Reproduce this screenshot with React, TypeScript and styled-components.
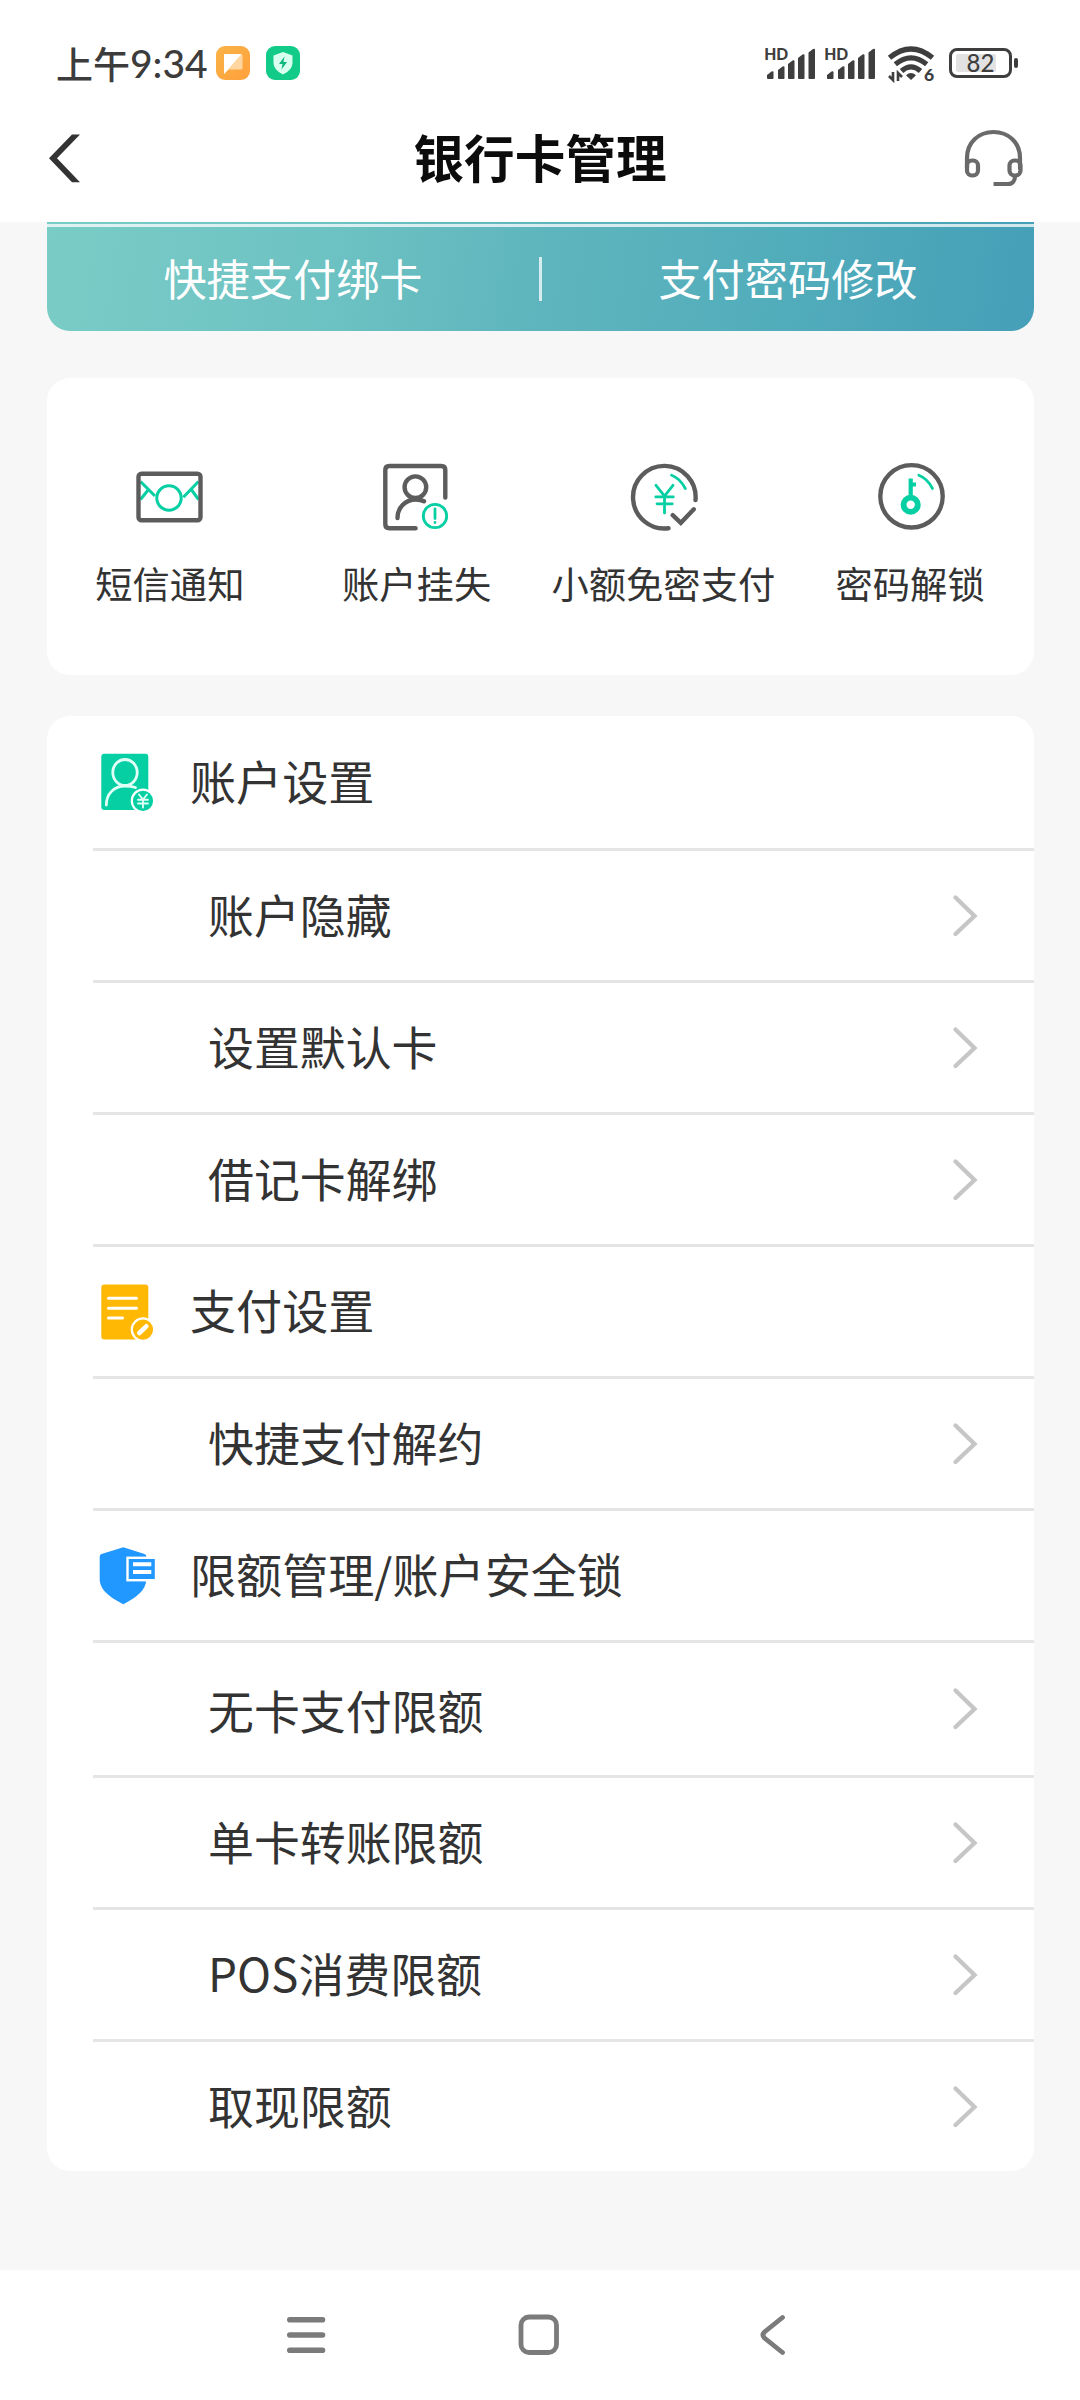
import React from 'react';
import styled, { createGlobalStyle } from 'styled-components';

const GlobalStyle = createGlobalStyle`
  * { box-sizing: border-box; }
  body { margin: 0; background: #f7f7f7; }
  svg { display: block; flex: none; overflow: visible; }
`;

const INK = '#333333';
const GREY = '#5c5c5c';
const MINT = '#06cfa4';

const Screen = styled.div`
  width: 1080px;
  height: 2400px;
  display: flex;
  flex-direction: column;
  overflow: hidden;
  background: #f7f7f7;
  color: ${INK};
  font-family: 'Noto Sans CJK SC', 'Noto Sans', sans-serif;
`;

const StatusBar = styled.header`
  height: 126px;
  flex: none;
  display: flex;
  align-items: center;
  justify-content: space-between;
  padding: 0 61px 0 56px;
  background: #fff;
`;

const StatusSide = styled.div`
  display: flex;
  align-items: center;
`;

const Clock = styled.div`
  display: flex;
  align-items: center;
  width: 160px;
  height: 40px;
  color: #3c3c3c;
  white-space: nowrap;
`;

const DayPart = styled.span`
  font-size: 37px;
  font-weight: 500;
  line-height: 40px;
`;

const Time = styled.span`
  font-family: Lato, sans-serif;
  font-size: 39px;
  font-weight: 500;
  line-height: 40px;
`;

const NotificationIcons = styled.div`
  display: flex;
  gap: 16px;
`;

const TitleBar = styled.div`
  height: 96px;
  flex: none;
  display: grid;
  grid-template-columns: 80px 1fr 80px;
  align-items: center;
  padding: 0 48px;
  background: #fff;
`;

const Title = styled.h1`
  margin: 0;
  padding-bottom: 36px;
  text-align: center;
  font-size: 50.6px;
  line-height: 60px;
  font-weight: 700;
  color: #0c0c0c;
`;

const BarIcon = styled.div<{ $end?: boolean }>`
  display: flex;
  justify-content: ${(p) => (p.$end ? 'flex-end' : 'flex-start')};
  padding: 0 ${(p) => (p.$end ? 8 : 0)}px ${(p) => (p.$end ? 30 : 32)}px 0;
`;

const Content = styled.main`
  flex: 1;
  display: flex;
  flex-direction: column;
  padding: 0 46px 0 47px;
`;

const Banner = styled.section`
  height: 109px;
  display: flex;
  flex-direction: column;
  border-radius: 0 0 23px 23px;
  background: linear-gradient(98deg, #7accc6 0%, #6cc1c2 30%, #5fb5bd 50%, #52adbb 73%, #459fb8 100%);
`;

const BannerSeam = styled.div`
  height: 3px;
  margin-top: 2px;
  background: rgba(255, 255, 255, 0.75);
`;

const BannerActions = styled.div`
  flex: 1;
  display: flex;
  align-items: center;
`;

const BannerAction = styled.button`
  flex: 1;
  border: 0;
  padding: 0 0 5px;
  background: none;
  color: #fff;
  font: 400 43.2px/60px 'Noto Sans CJK SC', sans-serif;
`;

const BannerDivider = styled.span`
  width: 3px;
  height: 44px;
  background: rgba(255, 255, 255, 0.75);
`;

const Card = styled.section`
  background: #fff;
  border-radius: 23px;
`;

const QuickCard = styled(Card)`
  height: 297px;
  margin: 47px 0 41px;
  display: grid;
  grid-template-columns: repeat(4, 1fr);
  padding-top: 82px;
`;

const QuickItem = styled.div`
  display: flex;
  flex-direction: column;
  align-items: center;
  gap: 22px;
`;

const QuickLabel = styled.span`
  padding-right: 1px;
  font-size: 37.3px;
  line-height: 54px;
  white-space: nowrap;
`;

const ListCard = styled(Card)`
  height: 1455px;
  padding-left: 46px;
`;

const Row = styled.div<{ $height: number; $section?: boolean }>`
  height: ${(p) => p.$height}px;
  display: flex;
  align-items: center;
  padding: 0 56px 0 ${(p) => (p.$section ? 4 : 115)}px;
  border-bottom: 3px solid #e5e5e5;
  &:last-child { border-bottom: 0; }
`;

const RowText = styled.span<{ $section?: boolean; $lift: number }>`
  flex: 1;
  padding-left: ${(p) => (p.$section ? 33 : 0)}px;
  padding-bottom: ${(p) => p.$lift}px;
  font-size: ${(p) => (p.$section ? 46.1 : 45.9)}px;
  line-height: 66px;
`;

const NavBar = styled.nav`
  height: 130px;
  flex: none;
  display: grid;
  grid-template-columns: 232px 241px 27px;
  align-items: center;
  padding-left: 286px;
  background: #fff;
`;

const signalBars = [
  [2, 71, 79], [13, 66, 79], [23, 60, 79], [33, 54, 79], [43.5, 48.5, 79],
];

const Signal = () => (
  <svg width="60" height="40" viewBox="0 43 60 40" fill="#3e3e3e">
    <text x="-0.8" y="59.6" fontFamily="Lato, sans-serif" fontSize="16.5" fontWeight="900" textLength="24" lengthAdjust="spacingAndGlyphs">HD</text>
    {signalBars.map(([x, top, bottom]) => (
      <path key={x} d={`M${x} ${top + 4}L${x + 4.5} ${top + 0.6}Q${x + 6.5} ${top - 0.6} ${x + 6.5} ${top + 1.6}V${bottom - 1}Q${x + 6.5} ${bottom} ${x + 5.5} ${bottom}H${x + 1}Q${x} ${bottom} ${x} ${bottom - 1}Z`} />
    ))}
  </svg>
);

const Wifi = () => (
  <svg width="64" height="40" viewBox="885 43 64 40" fill="none" stroke="#3e3e3e" strokeWidth="5.2">
    <path d="M889.5 57.8Q911 40.2 932.5 57.8" />
    <path d="M895.3 64.3Q911 51.4 926.7 64.3" />
    <path d="M901.5 71Q911 62.8 920.5 71" />
    <path d="M906 75.2Q911 71 916 75.2L911 80Z" fill="#3e3e3e" stroke="none" />
    <path d="M893 72V80L889 76M898 81V73L902 77" strokeWidth="2.6" />
    <text x="924" y="81" fill="#3e3e3e" stroke="none" fontFamily="Lato, sans-serif" fontSize="17.5" fontWeight="900">6</text>
  </svg>
);

const Battery = () => (
  <svg width="70" height="40" viewBox="949 43 70 40">
    <rect x="950.5" y="49.5" width="60" height="27" rx="6.5" fill="none" stroke="#3e3e3e" strokeWidth="3" />
    <rect x="956" y="54" width="40" height="18" rx="2" fill="#e2e2e2" />
    <rect x="1014" y="58" width="4" height="10" rx="2" fill="#3e3e3e" />
    <text x="980.5" y="71.5" textAnchor="middle" fill="#3e3e3e" fontFamily="Lato, sans-serif" fontSize="24" fontWeight="500">82</text>
  </svg>
);

const NoteApp = () => (
  <svg width="34" height="34" viewBox="0 0 34 34">
    <defs>
      <linearGradient id="note" x1="0" y1="0" x2="1" y2="1">
        <stop offset="0" stopColor="#f9b347" />
        <stop offset="1" stopColor="#ffa03c" />
      </linearGradient>
    </defs>
    <rect width="34" height="34" rx="9" fill="url(#note)" />
    <path d="M9 8H25Q26.5 8 26.5 9.5V22Q26.5 23.5 25 23.5H13L8 28V9Q8 8 9 8Z" fill="#ffd6a0" />
    <path d="M9 8H25.5L8 28V9Q8 8 9 8Z" fill="#fff" />
  </svg>
);

const ShieldApp = () => (
  <svg width="34" height="34" viewBox="0 0 34 34">
    <rect width="34" height="34" rx="9" fill="#12cb88" />
    <path d="M17 6L26.5 9.5V17Q26.5 24 17 28.5Q7.5 24 7.5 17V9.5Z" fill="#d9fff0" />
    <path d="M18.5 10.5L13 18H16.5L15.5 23.5L21 16H17.5Z" fill="#0eb87b" />
  </svg>
);

const BackArrow = () => (
  <svg width="33" height="50" viewBox="48 133 33 50">
    <path d="M72 134.5H80L57 158.3L80 182.3H72L49 158.3Z" fill={INK} />
  </svg>
);

const Headset = () => (
  <svg width="60" height="60" viewBox="964 129 60 60" fill="none" stroke="#6a6a6a" strokeWidth="4.2" strokeLinecap="round">
    <path d="M967 168V158C967 142 979 132 993.5 132S1020 142 1020 158V168" />
    <rect x="967" y="160.5" width="11" height="15" rx="5" />
    <rect x="1009.5" y="160.5" width="11" height="15" rx="5" />
    <path d="M1015 176C1015 181 1012.5 184 1008 184H993.5" strokeLinecap="butt" />
  </svg>
);

const iconBox = { width: 74, height: 74, viewBox: '0 0 74 74', fill: 'none', strokeLinecap: 'round' as const };

const SmsIcon = () => (
  <svg {...iconBox} stroke={MINT} strokeWidth="3">
    <g strokeLinecap="butt">
      <path d="M7.5 21.5L22 36M15.3 29.7L7.5 39.5M65.5 21.5L50.3 37.3M58.3 29.5L65.5 39.5" />
    </g>
    <circle cx="36" cy="38" r="12.2" />
    <rect x="5.5" y="13.7" width="62" height="46.6" rx="3" stroke={GREY} strokeWidth="4.4" />
  </svg>
);

const LossIcon = () => (
  <svg {...iconBox} stroke={GREY} strokeWidth="4.4">
    <path d="M65.3 37.5V10Q65.3 6 61.3 6H9.3Q5.3 6 5.3 10V64.2Q5.3 68.2 9.3 68.2H35.6" />
    <circle cx="35.4" cy="27.2" r="10.8" />
    <path d="M17.5 58C17.5 48 25 39.5 36 39.5Q40.5 39.5 44 41.3" />
    <g stroke={MINT} strokeWidth="2.8">
      <circle cx="55" cy="56" r="11.7" />
      <path d="M55 49V58.5M55 62.3V62.5" />
    </g>
  </svg>
);

const SmallPayIcon = () => (
  <svg {...iconBox} stroke={GREY} strokeWidth="4.4">
    <path d="M41.5 68.2A31.3 31.3 0 1 1 68.5 40" />
    <path d="M45.7 55.2L53.8 62.8L66.8 49.3" />
    <path d="M29 25.3L37.5 36L46 25.3M37.5 36V53M28.8 36.9H46.3M30 43.8H45.3M44.6 15.2Q53.3 18.5 58.3 28.5" stroke={MINT} strokeWidth="2.8" />
  </svg>
);

const UnlockIcon = () => (
  <svg {...iconBox} stroke={MINT} strokeWidth="2.8">
    <circle cx="37.5" cy="36.3" r="31.2" stroke={GREY} strokeWidth="4.4" />
    <circle cx="36.7" cy="44.7" r="7.1" strokeWidth="5.8" />
    <path d="M36.7 37V18.5M36.7 24.5H42" strokeWidth="4.2" strokeLinecap="butt" />
    <path d="M44.8 15.2Q53.5 18.5 58.5 28.5" />
  </svg>
);

const AccountIcon = () => (
  <svg width="60" height="60" viewBox="0 0 60 60" fill="none" stroke="#dffff7" strokeWidth="2.8" strokeLinecap="round">
    <rect x="4.3" y="1.8" width="47" height="56.2" rx="3" fill={MINT} stroke="none" />
    <ellipse cx="28" cy="20.5" rx="12.2" ry="13" />
    <path d="M9.3 53C9.3 42 17 34 28 34Q34 34 38.5 35.5" />
    <circle cx="46" cy="48.8" r="11.2" fill={MINT} stroke="#fff" strokeWidth="2.2" />
    <path d="M42 42.5L46 47.5L50 42.5M46 47.5V55.5M41 47.8H51M41 51.5H51" strokeWidth="1.9" />
  </svg>
);

const PaymentIcon = () => (
  <svg width="60" height="60" viewBox="0 0 60 60" fill="none" stroke="#fff" strokeWidth="3" strokeLinecap="round">
    <rect x="4.3" y="2.4" width="47" height="55" rx="3" fill="#ffb905" stroke="none" />
    <path d="M11.5 16.3H39.5M11.5 26.3H39.5M11.5 36H25.5" />
    <circle cx="46" cy="47.6" r="11.2" fill="#ffb905" strokeWidth="2.2" />
    <path d="M42.3 51L49.3 44.3" strokeWidth="4.6" />
  </svg>
);

const LimitIcon = () => (
  <svg width="60" height="60" viewBox="0 0 60 60">
    <path d="M26.3 1.3L47.5 8Q49.3 8.7 49.3 10.5V33C49.3 44.5 38.5 52 26.3 58.3C14 52 2.7 44.5 2.7 33V10.5Q2.7 8.7 4.5 8Z" fill="#2198ff" />
    <rect x="30.5" y="11.8" width="28.5" height="22.4" fill="#2198ff" stroke="#fff" strokeWidth="2.4" />
    <path d="M36 18.2H54.3M36 26H54.3" stroke="#fff" strokeWidth="4" />
  </svg>
);

const Chevron = () => (
  <svg width="25" height="42" viewBox="0 0 25 42" fill="none" stroke="#c6c6c6" strokeWidth="4.3" strokeLinecap="round">
    <path d="M2.5 2.5L21.5 21L2.5 39" />
  </svg>
);

const quickItems = [
  { label: '短信通知', Icon: SmsIcon },
  { label: '账户挂失', Icon: LossIcon },
  { label: '小额免密支付', Icon: SmallPayIcon },
  { label: '密码解锁', Icon: UnlockIcon },
];

const rows: { label: string; height: number; lift?: number; Icon?: React.FC }[] = [
  { label: '账户设置', height: 135, Icon: AccountIcon },
  { label: '账户隐藏', height: 132 },
  { label: '设置默认卡', height: 132 },
  { label: '借记卡解绑', height: 132 },
  { label: '支付设置', height: 132, Icon: PaymentIcon },
  { label: '快捷支付解约', height: 132 },
  { label: '限额管理/账户安全锁', height: 132, Icon: LimitIcon },
  { label: '无卡支付限额', height: 135, lift: 1 },
  { label: '单卡转账限额', height: 132 },
  { label: 'POS消费限额', height: 132 },
  { label: '取现限额', height: 129 },
];

export default function App() {
  return (
    <Screen>
      <GlobalStyle />
      <StatusBar>
        <StatusSide>
          <Clock>
            <DayPart>上午</DayPart>
            <Time>9:34</Time>
          </Clock>
          <NotificationIcons>
            <NoteApp />
            <ShieldApp />
          </NotificationIcons>
        </StatusSide>
        <StatusSide>
          <Signal />
          <Signal />
          <Wifi />
          <Battery />
        </StatusSide>
      </StatusBar>
      <TitleBar>
        <BarIcon><BackArrow /></BarIcon>
        <Title>银行卡管理</Title>
        <BarIcon $end><Headset /></BarIcon>
      </TitleBar>
      <Content>
        <Banner>
          <BannerSeam />
          <BannerActions>
            <BannerAction>快捷支付绑卡</BannerAction>
            <BannerDivider />
            <BannerAction>支付密码修改</BannerAction>
          </BannerActions>
        </Banner>
        <QuickCard>
          {quickItems.map(({ label, Icon }) => (
            <QuickItem key={label}>
              <Icon />
              <QuickLabel>{label}</QuickLabel>
            </QuickItem>
          ))}
        </QuickCard>
        <ListCard>
          {rows.map(({ label, height, lift = 5, Icon }) => (
            <Row key={label} $height={height} $section={!!Icon}>
              {Icon && <Icon />}
              <RowText $section={!!Icon} $lift={lift}>{label}</RowText>
              {!Icon && <Chevron />}
            </Row>
          ))}
        </ListCard>
      </Content>
      <NavBar>
        <svg width="40" height="44" viewBox="0 0 40 44" stroke="#7b7b7b" strokeWidth="5.6" strokeLinecap="round">
          <path d="M3.8 6.7H36.5M3.8 22H36.5M3.8 37.3H36.5" />
        </svg>
        <svg width="42" height="44" viewBox="0 0 42 44" fill="none" stroke="#7b7b7b" strokeWidth="4.8">
          <rect x="3" y="4" width="35.5" height="35.5" rx="8" />
        </svg>
        <svg width="27" height="44" viewBox="0 0 27 44" fill="none" stroke="#7b7b7b" strokeWidth="4.8" strokeLinecap="round">
          <path d="M23.5 4.5L5.5 19Q2.5 22 5.5 25L23.5 39.5" />
        </svg>
      </NavBar>
    </Screen>
  );
}
